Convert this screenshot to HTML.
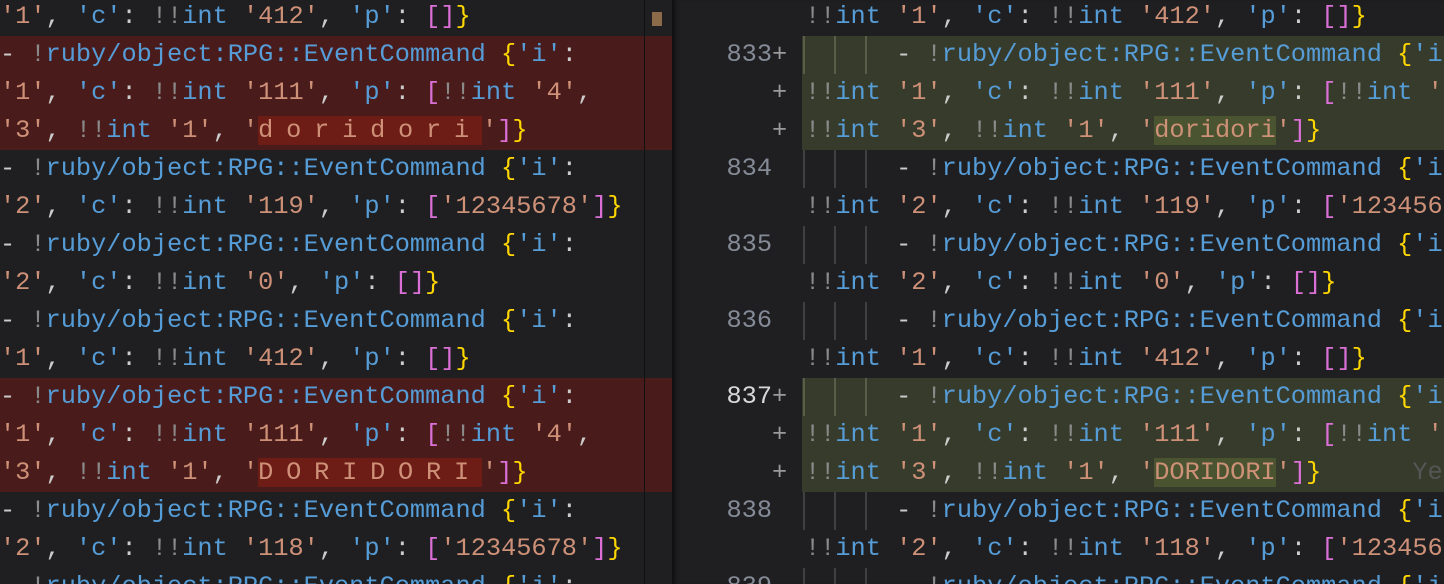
<!DOCTYPE html>
<html><head><meta charset="utf-8"><style>
body{margin:0;width:1444px;height:584px;overflow:hidden;background:#1f1f22;font-family:"Liberation Mono",monospace;font-size:25.3px;}
.pane{position:absolute;top:0;height:584px;overflow:hidden}
#L{left:0;width:672px;background:#1f1f22}
#R{left:672px;width:772px;background:#1f1f22;box-shadow:inset 6px 0 6px -4px #0a0a0a}
.row{position:absolute;left:0;right:0;height:38px;line-height:38px;white-space:pre;color:#cccccc}
.red{background:#4a1b1b}
.grn{background:#373b2b}
.b{color:#569cd6}.o{color:#ce9178}.g{color:#8a8a8a}.y{color:#ffd700}.p{color:#da70d6}.w{color:#cccccc}
.hr{background:#6e1c16;letter-spacing:12.8px}
.hg{background:#4b5430}
.code{position:absolute;left:0;top:0}
#R .code{left:133px}
.ln{position:absolute;left:0;width:100px;text-align:right;color:#858b96}
.pl{position:absolute;left:100px;color:#9a9a9a}
.gd{position:absolute;top:0;height:38px;width:2px;background:#404040}
.sb{position:absolute;left:644px;top:0;width:1px;height:584px;background:#111}
</style></head><body>
<div class="pane" id="L">
<div class="row" style="top:-2px"><span class="code"><span class="o">'1'</span>, <span class="b">'c'</span>: <span class="g">!!</span><span class="b">int</span> <span class="o">'412'</span>, <span class="b">'p'</span>: <span class="p">[]</span><span class="y">}</span></span></div>
<div class="row red" style="top:36px"><span class="code">- <span class="g">!</span><span class="b">ruby/object:RPG::EventCommand</span> <span class="y">{</span><span class="b">'i'</span>:</span></div>
<div class="row red" style="top:74px"><span class="code"><span class="o">'1'</span>, <span class="b">'c'</span>: <span class="g">!!</span><span class="b">int</span> <span class="o">'111'</span>, <span class="b">'p'</span>: <span class="p">[</span><span class="g">!!</span><span class="b">int</span> <span class="o">'4'</span>,</span></div>
<div class="row red" style="top:112px"><span class="code"><span class="o">'3'</span>, <span class="g">!!</span><span class="b">int</span> <span class="o">'1'</span>, <span class="o">'<span class="hr">doridori</span>'</span><span class="p">]</span><span class="y">}</span></span></div>
<div class="row" style="top:150px"><span class="code">- <span class="g">!</span><span class="b">ruby/object:RPG::EventCommand</span> <span class="y">{</span><span class="b">'i'</span>:</span></div>
<div class="row" style="top:188px"><span class="code"><span class="o">'2'</span>, <span class="b">'c'</span>: <span class="g">!!</span><span class="b">int</span> <span class="o">'119'</span>, <span class="b">'p'</span>: <span class="p">[</span><span class="o">'12345678'</span><span class="p">]</span><span class="y">}</span></span></div>
<div class="row" style="top:226px"><span class="code">- <span class="g">!</span><span class="b">ruby/object:RPG::EventCommand</span> <span class="y">{</span><span class="b">'i'</span>:</span></div>
<div class="row" style="top:264px"><span class="code"><span class="o">'2'</span>, <span class="b">'c'</span>: <span class="g">!!</span><span class="b">int</span> <span class="o">'0'</span>, <span class="b">'p'</span>: <span class="p">[]</span><span class="y">}</span></span></div>
<div class="row" style="top:302px"><span class="code">- <span class="g">!</span><span class="b">ruby/object:RPG::EventCommand</span> <span class="y">{</span><span class="b">'i'</span>:</span></div>
<div class="row" style="top:340px"><span class="code"><span class="o">'1'</span>, <span class="b">'c'</span>: <span class="g">!!</span><span class="b">int</span> <span class="o">'412'</span>, <span class="b">'p'</span>: <span class="p">[]</span><span class="y">}</span></span></div>
<div class="row red" style="top:378px"><span class="code">- <span class="g">!</span><span class="b">ruby/object:RPG::EventCommand</span> <span class="y">{</span><span class="b">'i'</span>:</span></div>
<div class="row red" style="top:416px"><span class="code"><span class="o">'1'</span>, <span class="b">'c'</span>: <span class="g">!!</span><span class="b">int</span> <span class="o">'111'</span>, <span class="b">'p'</span>: <span class="p">[</span><span class="g">!!</span><span class="b">int</span> <span class="o">'4'</span>,</span></div>
<div class="row red" style="top:454px"><span class="code"><span class="o">'3'</span>, <span class="g">!!</span><span class="b">int</span> <span class="o">'1'</span>, <span class="o">'<span class="hr">DORIDORI</span>'</span><span class="p">]</span><span class="y">}</span></span></div>
<div class="row" style="top:492px"><span class="code">- <span class="g">!</span><span class="b">ruby/object:RPG::EventCommand</span> <span class="y">{</span><span class="b">'i'</span>:</span></div>
<div class="row" style="top:530px"><span class="code"><span class="o">'2'</span>, <span class="b">'c'</span>: <span class="g">!!</span><span class="b">int</span> <span class="o">'118'</span>, <span class="b">'p'</span>: <span class="p">[</span><span class="o">'12345678'</span><span class="p">]</span><span class="y">}</span></span></div>
<div class="row" style="top:568px"><span class="code">- <span class="g">!</span><span class="b">ruby/object:RPG::EventCommand</span> <span class="y">{</span><span class="b">'i'</span>:</span></div>
<div class="sb"></div>
<div style="position:absolute;left:652px;top:12px;width:10px;height:14px;background:#8a6a48"></div>
</div>
<div class="pane" id="R">
<div class="row" style="top:-2px"><span class="code"><span class="g">!!</span><span class="b">int</span> <span class="o">'1'</span>, <span class="b">'c'</span>: <span class="g">!!</span><span class="b">int</span> <span class="o">'412'</span>, <span class="b">'p'</span>: <span class="p">[]</span><span class="y">}</span></span></div>

<div class="row" style="top:36px"><span class="ln">833</span><span class="pl">+</span><div style="position:absolute;left:130px;right:0;top:0;bottom:0" class="grn"></div><span class="gd" style="left:131px;background:#5a5e48"></span><span class="gd" style="left:162px;background:#5a5e48"></span><span class="gd" style="left:193px;background:#5a5e48"></span><span class="code">      - <span class="g">!</span><span class="b">ruby/object:RPG::EventCommand</span> <span class="y">{</span><span class="b">'i'</span>:</span></div>
<div class="row" style="top:74px"><span class="pl">+</span><div style="position:absolute;left:130px;right:0;top:0;bottom:0" class="grn"></div><span class="code"><span class="g">!!</span><span class="b">int</span> <span class="o">'1'</span>, <span class="b">'c'</span>: <span class="g">!!</span><span class="b">int</span> <span class="o">'111'</span>, <span class="b">'p'</span>: <span class="p">[</span><span class="g">!!</span><span class="b">int</span> <span class="o">'4'</span>,</span></div>
<div class="row" style="top:112px"><span class="pl">+</span><div style="position:absolute;left:130px;right:0;top:0;bottom:0" class="grn"></div><span class="code"><span class="g">!!</span><span class="b">int</span> <span class="o">'3'</span>, <span class="g">!!</span><span class="b">int</span> <span class="o">'1'</span>, <span class="o">'<span class="hg">doridori</span>'</span><span class="p">]</span><span class="y">}</span></span></div>

<div class="row" style="top:150px"><span class="ln">834</span><span class="gd" style="left:131px"></span><span class="gd" style="left:162px"></span><span class="gd" style="left:193px"></span><span class="code">      - <span class="g">!</span><span class="b">ruby/object:RPG::EventCommand</span> <span class="y">{</span><span class="b">'i'</span>:</span></div>
<div class="row" style="top:188px"><span class="code"><span class="g">!!</span><span class="b">int</span> <span class="o">'2'</span>, <span class="b">'c'</span>: <span class="g">!!</span><span class="b">int</span> <span class="o">'119'</span>, <span class="b">'p'</span>: <span class="p">[</span><span class="o">'12345678'</span><span class="p">]</span><span class="y">}</span></span></div>
<div class="row" style="top:226px"><span class="ln">835</span><span class="gd" style="left:131px"></span><span class="gd" style="left:162px"></span><span class="gd" style="left:193px"></span><span class="code">      - <span class="g">!</span><span class="b">ruby/object:RPG::EventCommand</span> <span class="y">{</span><span class="b">'i'</span>:</span></div>
<div class="row" style="top:264px"><span class="code"><span class="g">!!</span><span class="b">int</span> <span class="o">'2'</span>, <span class="b">'c'</span>: <span class="g">!!</span><span class="b">int</span> <span class="o">'0'</span>, <span class="b">'p'</span>: <span class="p">[]</span><span class="y">}</span></span></div>
<div class="row" style="top:302px"><span class="ln">836</span><span class="gd" style="left:131px"></span><span class="gd" style="left:162px"></span><span class="gd" style="left:193px"></span><span class="code">      - <span class="g">!</span><span class="b">ruby/object:RPG::EventCommand</span> <span class="y">{</span><span class="b">'i'</span>:</span></div>
<div class="row" style="top:340px"><span class="code"><span class="g">!!</span><span class="b">int</span> <span class="o">'1'</span>, <span class="b">'c'</span>: <span class="g">!!</span><span class="b">int</span> <span class="o">'412'</span>, <span class="b">'p'</span>: <span class="p">[]</span><span class="y">}</span></span></div>

<div class="row" style="top:378px"><span class="ln" style="color:#d8d8d8">837</span><span class="pl">+</span><div style="position:absolute;left:130px;right:0;top:0;bottom:0" class="grn"></div><span class="gd" style="left:131px;background:#5a5e48"></span><span class="gd" style="left:162px;background:#5a5e48"></span><span class="gd" style="left:193px;background:#5a5e48"></span><span class="code">      - <span class="g">!</span><span class="b">ruby/object:RPG::EventCommand</span> <span class="y">{</span><span class="b">'i'</span>:</span></div>
<div class="row" style="top:416px"><span class="pl">+</span><div style="position:absolute;left:130px;right:0;top:0;bottom:0" class="grn"></div><span class="code"><span class="g">!!</span><span class="b">int</span> <span class="o">'1'</span>, <span class="b">'c'</span>: <span class="g">!!</span><span class="b">int</span> <span class="o">'111'</span>, <span class="b">'p'</span>: <span class="p">[</span><span class="g">!!</span><span class="b">int</span> <span class="o">'4'</span>,</span></div>
<div class="row" style="top:454px"><span class="pl">+</span><div style="position:absolute;left:130px;right:0;top:0;bottom:0" class="grn"></div><span class="code"><span class="g">!!</span><span class="b">int</span> <span class="o">'3'</span>, <span class="g">!!</span><span class="b">int</span> <span class="o">'1'</span>, <span class="o">'<span class="hg">DORIDORI</span>'</span><span class="p">]</span><span class="y">}</span>      <span style="color:#555">Ye</span></span></div>

<div class="row" style="top:492px"><span class="ln">838</span><span class="gd" style="left:131px"></span><span class="gd" style="left:162px"></span><span class="gd" style="left:193px"></span><span class="code">      - <span class="g">!</span><span class="b">ruby/object:RPG::EventCommand</span> <span class="y">{</span><span class="b">'i'</span>:</span></div>
<div class="row" style="top:530px"><span class="code"><span class="g">!!</span><span class="b">int</span> <span class="o">'2'</span>, <span class="b">'c'</span>: <span class="g">!!</span><span class="b">int</span> <span class="o">'118'</span>, <span class="b">'p'</span>: <span class="p">[</span><span class="o">'12345678'</span><span class="p">]</span><span class="y">}</span></span></div>
<div class="row" style="top:568px"><span class="ln">839</span><span class="gd" style="left:131px"></span><span class="gd" style="left:162px"></span><span class="gd" style="left:193px"></span><span class="code">      - <span class="g">!</span><span class="b">ruby/object:RPG::EventCommand</span> <span class="y">{</span><span class="b">'i'</span>:</span></div>
</div>
</body></html>
